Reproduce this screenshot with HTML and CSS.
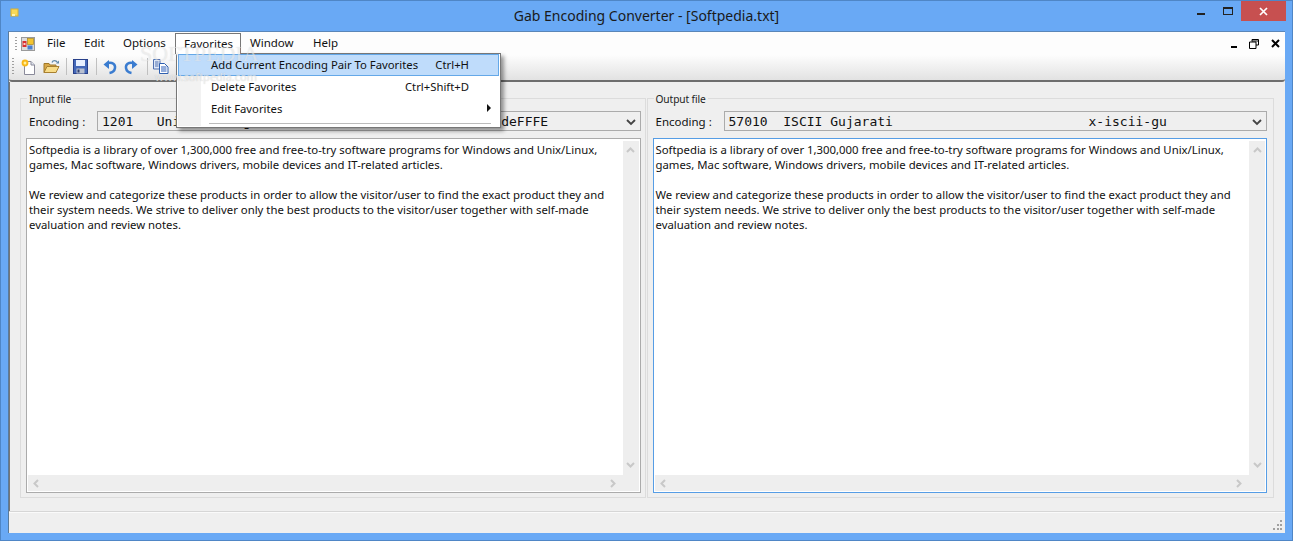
FILE: index.html
```html
<!DOCTYPE html>
<html lang="en">
<head>
<meta charset="utf-8">
<title>Gab Encoding Converter</title>
<link rel="stylesheet" href="styles.css">
</head>
<body>
<div class="window">
  <header class="titlebar">
    <svg class="app-icon" width="10" height="10" viewBox="0 0 10 10"><rect x="1" y="1" width="7" height="7" fill="#f8d95a" stroke="#d8b030" stroke-width="1"/><rect x="2" y="6" width="3" height="2" fill="#fff4b0"/></svg>
    <div class="title">Gab Encoding Converter - [Softpedia.txt]</div>
    <div class="caption">
      <span class="cap-btn"><i class="cap-min"></i></span>
      <span class="cap-btn"><i class="cap-max"></i></span>
      <span class="cap-close"><svg width="9" height="9" viewBox="0 0 9 9"><path d="M1 1L8 8M8 1L1 8" stroke="#fff" stroke-width="1.700"/></svg></span>
    </div>
  </header>
  <main class="client">
    <nav class="menubar">
      <span class="grip"></span>
      <svg class="mdi-icon" width="14" height="14" viewBox="0 0 14 14"><rect x=".5" y=".5" width="13" height="13" fill="#dcdcdc" stroke="#9a9a9a"/><rect x="6.500" y="1.500" width="6" height="6" fill="#f4c430" stroke="#a88820" stroke-width=".7"/><rect x="1.500" y="4" width="4" height="6" fill="#d83030"/><rect x="2.500" y="6" width="2" height="2" fill="#f8d0d0"/><rect x="6.500" y="8.500" width="5" height="4" fill="#4a80d0"/></svg>
      <span class="menu-item m-file">File</span>
      <span class="menu-item m-edit">Edit</span>
      <span class="menu-item m-options">Options</span>
      <span class="menu-item m-fav">Favorites</span>
      <span class="menu-item m-window">Window</span>
      <span class="menu-item m-help">Help</span>
      <div class="mdi-controls">
        <i class="mdi-min"></i>
        <svg width="10" height="10" viewBox="0 0 10 10"><path d="M3 2.500V.5H9.500V6H7M.5 3H7V9.500H.5Z M3 2H9" fill="none" stroke="#000"/></svg>
        <svg width="9" height="9" viewBox="0 0 9 9"><path d="M1 1L8 8M8 1L1 8" stroke="#000" stroke-width="2"/></svg>
      </div>
    </nav>
    <div class="toolbar">
      <span class="grip"></span>
      <svg class="tool tool-new" width="16" height="16" viewBox="0 0 16 16"><path d="M4.500 2.500H11L14.500 6V15.500H4.500Z" fill="#fff" stroke="#8a8a9a"/><path d="M11 2.500V6H14.500" fill="#dde4f0" stroke="#8a8a9a"/><circle cx="5" cy="4" r="3.400" fill="#f8b818"/><circle cx="5" cy="4" r="1.500" fill="#fff0a0"/></svg>
      <svg class="tool tool-open" width="17" height="15" viewBox="0 0 17 15"><path d="M1 13.500V4.500H6L7 6H13V13.500Z" fill="#d8a848" stroke="#a07828"/><path d="M1 13.500L4 7.500H16L13 13.500Z" fill="#f8dc88" stroke="#a88030"/><path d="M9 3.500C10 1 13 1 14.500 3.500" fill="none" stroke="#6088a8" stroke-width="1.300"/><path d="M13 4.500H16V1.500Z" fill="#6088a8"/></svg>
      <span class="sep sep-a"></span>
      <svg class="tool tool-save" width="15" height="15" viewBox="0 0 15 15"><rect x=".5" y=".5" width="14" height="14" fill="#4468b8" stroke="#28408a"/><rect x="3" y="1" width="9" height="6" fill="#e8f0ff"/><rect x="3.500" y="9.500" width="8" height="5" fill="#b8c0d0"/><rect x="4.500" y="10.500" width="2" height="3" fill="#304070"/></svg>
      <span class="sep sep-b"></span>
      <svg class="tool tool-undo" width="16" height="16" viewBox="0 0 16 16"><path d="M6 4C10.500 3 13.500 5.500 13 9C12.600 11.500 10.500 13.500 7.500 14" fill="none" stroke="#3a7cd0" stroke-width="2.500"/><path d="M1.500 5.500L7 1V10Z" fill="#3a7cd0"/></svg>
      <svg class="tool tool-redo" width="16" height="16" viewBox="0 0 16 16"><path d="M10 4C5.500 3 2.500 5.500 3 9C3.400 11.500 5.500 13.500 8.500 14" fill="none" stroke="#3a7cd0" stroke-width="2.500"/><path d="M14.500 5.500L9 1V10Z" fill="#3a7cd0"/></svg>
      <span class="sep sep-b"></span>
      <svg class="tool" width="16" height="15" viewBox="0 0 16 15"><path d="M.5 .5H7V10H.5Z" fill="#dfe8f8" stroke="#5070b0"/><path d="M2 3H5.500M2 5H5.500M2 7H5.500" stroke="#5070b0"/><path d="M6.500 4.500H11.500L15 8V14.500H6.500Z" fill="#fff" stroke="#3060b0"/><path d="M8 8H13.500M8 10H13.500M8 12H13.500" stroke="#2a5cb8" stroke-width="1"/></svg>
    </div>
    <div class="content">
      <section class="group group-input">
        <span class="legend">Input file</span>
        <div class="enc-row">
          <label class="enc-label">Encoding :</label>
          <div class="combo"><span class="combo-text">1201   Unicode (Big-Endian)                   unicodeFFFE</span><svg class="chev" width="10" height="7" viewBox="0 0 10 7"><path d="M1 1L5 5L9 1" fill="none" stroke="#444" stroke-width="1.800"/></svg></div>
        </div>
        <div class="textbox">
          <div class="text-area">
            <p>Softpedia is a library of over 1,300,000 free and free-to-try software programs for Windows and Unix/Linux, games, Mac software, Windows drivers, mobile devices and IT-related articles.</p>
            <p>We review and categorize these products in order to allow the visitor/user to find the exact product they and their system needs. We strive to deliver only the best products to the visitor/user together with self&#8209;made evaluation and review notes.</p>
          </div>
          <div class="vscroll"><svg width="9" height="6" viewBox="0 0 9 6"><path d="M1 5L4.500 1.500L8 5" fill="none" stroke="#c8c8c8" stroke-width="2"/></svg><svg width="9" height="6" viewBox="0 0 9 6"><path d="M1 1L4.500 4.500L8 1" fill="none" stroke="#c8c8c8" stroke-width="2"/></svg></div>
          <div class="hscroll"><svg width="6" height="9" viewBox="0 0 6 9"><path d="M5 1L1.500 4.500L5 8" fill="none" stroke="#c8c8c8" stroke-width="2"/></svg><svg width="6" height="9" viewBox="0 0 6 9"><path d="M1 1L4.500 4.500L1 8" fill="none" stroke="#c8c8c8" stroke-width="2"/></svg></div>
        </div>
      </section>
      <section class="group group-output">
        <span class="legend">Output file</span>
        <div class="enc-row">
          <label class="enc-label">Encoding :</label>
          <div class="combo"><span class="combo-text">57010  ISCII Gujarati                         x-iscii-gu</span><svg class="chev" width="10" height="7" viewBox="0 0 10 7"><path d="M1 1L5 5L9 1" fill="none" stroke="#444" stroke-width="1.800"/></svg></div>
        </div>
        <div class="textbox textbox-focus">
          <div class="text-area">
            <p>Softpedia is a library of over 1,300,000 free and free-to-try software programs for Windows and Unix/Linux, games, Mac software, Windows drivers, mobile devices and IT-related articles.</p>
            <p>We review and categorize these products in order to allow the visitor/user to find the exact product they and their system needs. We strive to deliver only the best products to the visitor/user together with self&#8209;made evaluation and review notes.</p>
          </div>
          <div class="vscroll"><svg width="9" height="6" viewBox="0 0 9 6"><path d="M1 5L4.500 1.500L8 5" fill="none" stroke="#c8c8c8" stroke-width="2"/></svg><svg width="9" height="6" viewBox="0 0 9 6"><path d="M1 1L4.500 4.500L8 1" fill="none" stroke="#c8c8c8" stroke-width="2"/></svg></div>
          <div class="hscroll"><svg width="6" height="9" viewBox="0 0 6 9"><path d="M5 1L1.500 4.500L5 8" fill="none" stroke="#c8c8c8" stroke-width="2"/></svg><svg width="6" height="9" viewBox="0 0 6 9"><path d="M1 1L4.500 4.500L1 8" fill="none" stroke="#c8c8c8" stroke-width="2"/></svg></div>
        </div>
      </section>
    </div>
    <footer class="statusbar"><svg width="11" height="11" viewBox="0 0 11 11"><path d="M8 0h2v2H8zM5 4h2v2H5zM8 4h2v2H8zM1 8h2v2H1zM5 8h2v2H5zM8 8h2v2H8z" fill="#a0a0a0"/></svg></footer>
    <div class="menu-popup">
      <div class="popup-row popup-active"><span>Add Current Encoding Pair To Favorites</span><span class="shortcut">Ctrl+H</span></div>
      <div class="popup-row"><span>Delete Favorites</span><span class="shortcut">Ctrl+Shift+D</span></div>
      <div class="popup-row"><span>Edit Favorites</span><i class="submenu-arrow"></i></div>
      <div class="popup-rule"></div>
    </div>
    <div class="wm-text">SOFTPEDIA</div>
    <div class="wm-url">www.softpedia.com</div>
  </main>
</div>
</body>
</html>
```
FILE: styles.css
```css
* { box-sizing: border-box; }
html, body { margin: 0; padding: 0; width: 1293px; height: 541px; overflow: hidden; }
body { font-family: "Noto Sans", "Open Sans", sans-serif; font-size: 11.5px; color: #000; }
.window { width: 1293px; height: 541px; background: #69a9f5; border: 1px solid #4f86c6; display: flex; flex-direction: column; padding: 0 7px 7px; }
.titlebar { height: 30px; display: flex; align-items: flex-start; position: relative; flex: none; }
.app-icon { margin: 7px 0 0 2px; }
.title { position: absolute; left: 0; right: 0; top: 6px; text-align: center; font-size: 14px; line-height: 18px; color: #1a1a1a; }
.caption { margin-left: auto; display: flex; margin-right: -1px; }
.cap-btn { width: 27px; height: 20px; display: flex; align-items: center; justify-content: center; }
.cap-min { width: 8px; height: 2px; background: #222; margin-top: 6px; }
.cap-max { width: 10px; height: 8px; border: 1px solid #222; border-top-width: 2px; }
.cap-close { width: 45px; height: 20px; background: #c75050; display: flex; align-items: center; justify-content: center; }
.client { flex: 1; position: relative; background: #efefef; display: flex; flex-direction: column; border-left: 1px solid #5a7a9a; border-top: 1px solid #5a86b8; min-height: 0; }
.menubar { height: 23px; flex: none; background: #fdfdfd; display: flex; align-items: center; padding-left: 6px; position: relative; }
.grip { width: 2px; height: 14px; background-image: linear-gradient(#a0a0a0 50%, transparent 50%); background-size: 2px 3px; flex: none; }
.mdi-icon { margin-left: 4px; }
.menu-item { position: absolute; top: 3px; line-height: 16px; color: #111; }
.m-file { left: 38px; }
.m-edit { left: 75px; }
.m-options { left: 114px; }
.m-fav { left: 166px; top: 1px; width: 66px; height: 21px; padding: 2px 0 0 8px; border: 1px solid #777; border-bottom: 0; background: #fff; z-index: 3; }
.m-window { left: 241px; }
.m-help { left: 304px; }
.mdi-controls { margin-left: auto; display: flex; align-items: center; gap: 12px; margin-right: 5px; }
.mdi-min { width: 6px; height: 2px; background: #000; margin-top: 7px; }
.toolbar { height: 27px; flex: none; background: linear-gradient(#fdfdfd, #e2e2e2); display: flex; align-items: center; padding: 0 0 2px 3px; border-bottom: 2px solid #6e6e6e; border-radius: 0 0 3px 3px; }
.toolbar .grip { margin-right: 6px; height: 18px; }
.tool { flex: none; }
.tool-new { margin-right: 7px; }
.tool-open { margin-right: 6px; }
.sep { width: 1px; height: 17px; background: #c0c0c0; flex: none; }
.sep-a { margin-right: 6px; }
.sep-b { margin-right: 5px; }
.tool-save { margin-right: 8px; }
.tool-undo { margin-right: 5px; }
.tool-redo { margin-right: 8px; }
.content { flex: 1; display: flex; gap: 1px; padding: 16px 11px 13px 10px; border-left: 1px solid #777; min-height: 0; }
.group { flex: 1; position: relative; border: 1px solid #dcdcdc; padding: 12px 4px 4px 5px; display: flex; flex-direction: column; min-width: 0; }
.group-output { padding-right: 6px; }
.legend { position: absolute; left: 6px; top: -7px; background: #efefef; padding: 0 2px; font-size: 10.2px; line-height: 14px; color: #222; letter-spacing: -.1px; }
.enc-row { display: flex; align-items: center; height: 20px; flex: none; }
.enc-label { width: 71px; flex: none; padding: 2px 0 0 3px; font-size: 11.5px; line-height: 16px; color: #111; }
.combo { flex: 1; height: 20px; border: 1px solid #ababab; background: #efefef; display: flex; align-items: center; padding-left: 4px; position: relative; min-width: 0; }
.combo-text { font-family: "DejaVu Sans Mono", monospace; font-size: 13px; white-space: pre; color: #111; }
.chev { position: absolute; right: 4px; top: 7px; }
.textbox { flex: 1; margin-top: 7px; border: 1px solid #ababab; background: #fff; position: relative; min-height: 0; padding: 3px 18px 18px 2px; }
.textbox-focus { border-color: #569de5; }
.text-area { font-size: 11.35px; line-height: 15px; color: #111; }
.text-area p { margin: 0 0 15px; }
.vscroll { position: absolute; right: 1px; top: 2px; bottom: 17px; width: 16px; background: #eeeeee; display: flex; flex-direction: column; justify-content: space-between; align-items: center; padding: 6px 0 7px; }
.hscroll { position: absolute; left: 1px; right: 1px; bottom: 1px; height: 16px; background: #eeeeee; display: flex; justify-content: space-between; align-items: center; padding: 0 23px 0 5px; }
.statusbar { height: 22px; flex: none; border-top: 1px solid #d6d6d6; display: flex; justify-content: flex-end; align-items: flex-end; padding: 0 2px 2px 0; box-shadow: inset 0 1px 0 #fafafa; }
.menu-popup { position: absolute; left: 167px; top: 21px; width: 325px; height: 75px; background: #fff; border: 1px solid #777; box-shadow: 3px 3px 4px rgba(0,0,0,.4); padding: 0 1px; z-index: 2; font-size: 11.3px; }
.menu-popup::before { content: ""; position: absolute; left: 1px; top: 1px; bottom: 1px; width: 23px; background: #f2f2f2; }
.popup-row { height: 22px; padding: 0 30px 2px 33px; display: flex; justify-content: space-between; align-items: center; position: relative; color: #111; }
.popup-active { background: #bfdcfb; border: 1px solid #64a8e8; padding: 0 29px 2px 32px; }
.submenu-arrow { width: 0; height: 0; border-left: 4px solid #111; border-top: 4px solid transparent; border-bottom: 4px solid transparent; margin-right: -22px; }
.popup-rule { height: 1px; background: #bcbcbc; margin: 3px 8px 0 31px; position: relative; }
.wm-text { position: absolute; left: 131px; top: 12px; height: 20px; font-family: "Liberation Serif", serif; font-size: 22px; line-height: 20px; color: rgba(255,255,255,.45); text-shadow: 0 0 1px rgba(150,150,150,.3); z-index: 4; white-space: nowrap; pointer-events: none; }
.wm-url { position: absolute; left: 146px; top: 39px; font-size: 11px; line-height: 12px; color: rgba(255,255,255,.6); text-shadow: 0 0 1px rgba(120,120,120,.4); z-index: 4; white-space: nowrap; pointer-events: none; }
```
